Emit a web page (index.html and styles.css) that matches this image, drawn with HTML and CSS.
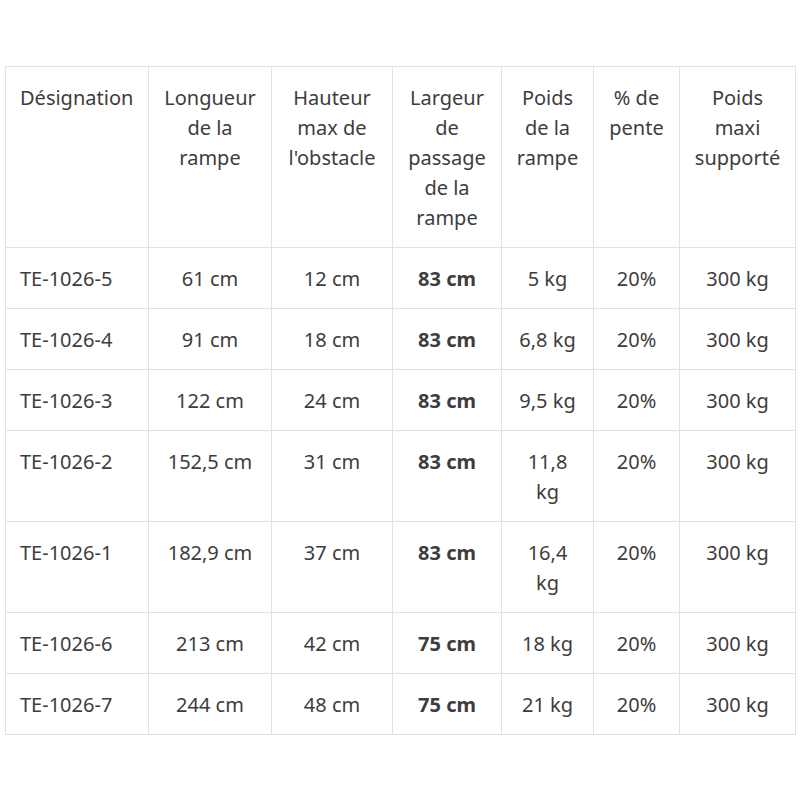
FILE: index.html
```html
<!DOCTYPE html>
<html lang="fr">
<head>
<meta charset="utf-8">
<link rel="stylesheet" href="styles.css">
</head>
<body>
<table class="spec">
  <colgroup>
    <col class="c1"><col class="c2"><col class="c3"><col class="c4"><col class="c5"><col class="c6"><col class="c7">
  </colgroup>
  <thead>
    <tr>
      <th class="left">Désignation</th>
      <th>Longueur de la rampe</th>
      <th>Hauteur max de l'obstacle</th>
      <th>Largeur de passage de la rampe</th>
      <th>Poids de la rampe</th>
      <th>% de pente</th>
      <th>Poids maxi supporté</th>
    </tr>
  </thead>
  <tbody>
    <tr><td class="left">TE-1026-5</td><td>61 cm</td><td>12 cm</td><td><strong>83 cm</strong></td><td>5 kg</td><td>20%</td><td>300 kg</td></tr>
    <tr><td class="left">TE-1026-4</td><td>91 cm</td><td>18 cm</td><td><strong>83 cm</strong></td><td>6,8 kg</td><td>20%</td><td>300 kg</td></tr>
    <tr><td class="left">TE-1026-3</td><td>122 cm</td><td>24 cm</td><td><strong>83 cm</strong></td><td>9,5 kg</td><td>20%</td><td>300 kg</td></tr>
    <tr><td class="left">TE-1026-2</td><td>152,5 cm</td><td>31 cm</td><td><strong>83 cm</strong></td><td>11,8 kg</td><td>20%</td><td>300 kg</td></tr>
    <tr><td class="left">TE-1026-1</td><td>182,9 cm</td><td>37 cm</td><td><strong>83 cm</strong></td><td>16,4 kg</td><td>20%</td><td>300 kg</td></tr>
    <tr><td class="left">TE-1026-6</td><td>213 cm</td><td>42 cm</td><td><strong>75 cm</strong></td><td>18 kg</td><td>20%</td><td>300 kg</td></tr>
    <tr><td class="left">TE-1026-7</td><td>244 cm</td><td>48 cm</td><td><strong>75 cm</strong></td><td>21 kg</td><td>20%</td><td>300 kg</td></tr>
  </tbody>
</table>
</body>
</html>
```
FILE: styles.css
```css
html, body {
  margin: 0;
  padding: 0;
  background: #ffffff;
}
body {
  font-family: "Noto Sans", "Open Sans", sans-serif;
  font-size: 20px;
  color: #3d3d3d;
}
.spec {
  margin: 66px 5px 0 5px;
  width: 790px;
  border-collapse: collapse;
  table-layout: fixed;
}
.c1 { width: 143px; }
.c2 { width: 123px; }
.c3 { width: 121px; }
.c4 { width: 109px; }
.c5 { width: 92px; }
.c6 { width: 86px; }
.c7 { width: 116px; }
.spec th,
.spec td {
  border: 1px solid #e0e1e5;
  padding: 16px 14px 14px;
  line-height: 30px;
  text-align: center;
  vertical-align: top;
  font-weight: 400;
}
.spec .left {
  text-align: left;
}
.spec strong {
  font-weight: 700;
}
```
